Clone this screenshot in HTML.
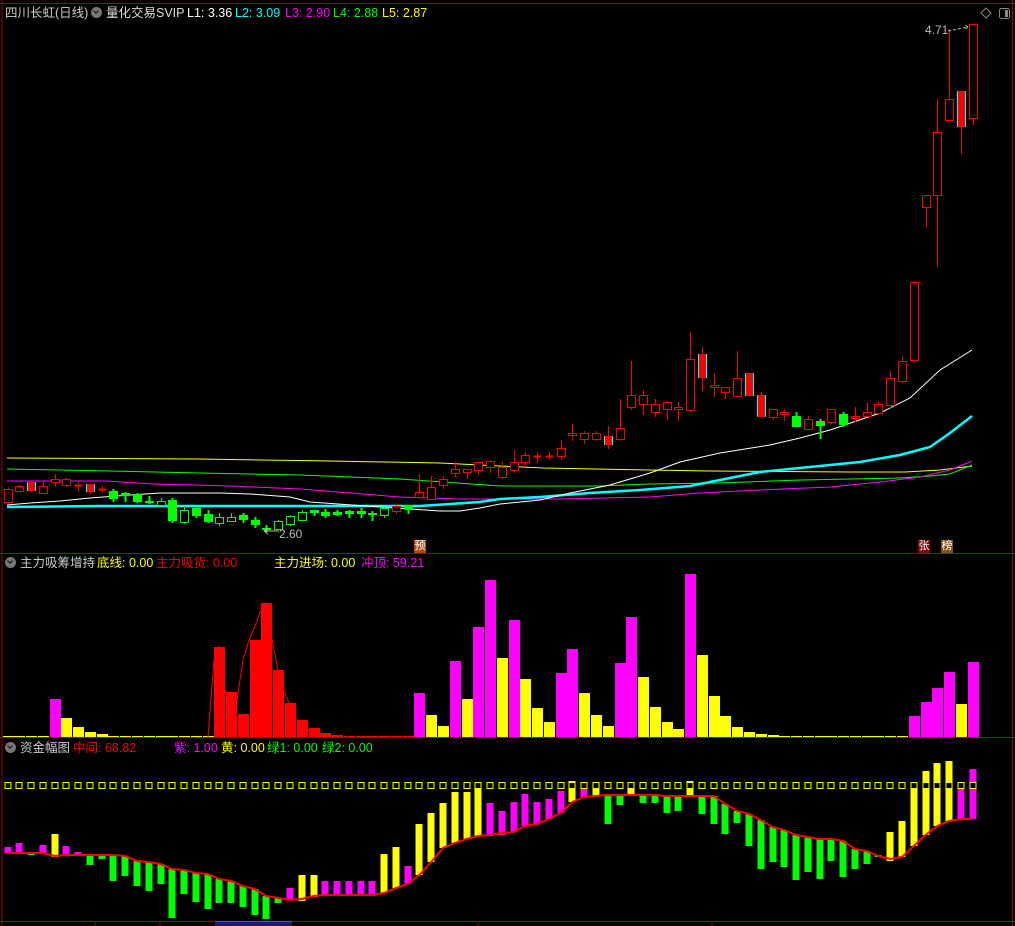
<!DOCTYPE html>
<html><head><meta charset="utf-8"><style>
html,body{margin:0;padding:0;background:#000;overflow:hidden}
body{width:1015px;height:926px;position:relative;font-family:"Liberation Sans","Noto Sans CJK SC",sans-serif}
svg{position:absolute;left:0;top:0}
.t{position:absolute;font-size:12.5px;white-space:nowrap;line-height:14px}
.ic{position:absolute;width:11px;height:11px;border-radius:50%;background:#777}
.ic:after{content:"";position:absolute;left:3px;top:2px;width:3px;height:3px;border-right:1.5px solid #111;border-bottom:1.5px solid #111;transform:rotate(45deg)}
.mk{position:absolute;font-size:11px;color:#fff;width:12px;height:13px;line-height:13px;text-align:center}
</style></head><body>
<svg id="s" width="1015" height="926" xmlns="http://www.w3.org/2000/svg"></svg>
<div class="t" style="left:5px;top:6px;color:#ccc">四川长虹(日线)</div>
<div class="ic" style="left:91px;top:7px"></div>
<div class="t" style="left:106px;top:6px;color:#ddd">量化交易SVIP</div>
<div class="t" style="left:187px;top:6px;color:#fff">L1: 3.36</div>
<div class="t" style="left:235px;top:6px;color:#0ff">L2: 3.09</div>
<div class="t" style="left:285px;top:6px;color:#f0f">L3: 2.90</div>
<div class="t" style="left:333px;top:6px;color:#0f0">L4: 2.88</div>
<div class="t" style="left:382px;top:6px;color:#ff0">L5: 2.87</div>

<div class="ic" style="left:5px;top:557px"></div>
<div class="t" style="left:20px;top:556px;color:#ccc">主力吸筹增持</div>
<div class="t" style="left:97px;top:556px;color:#ff0">底线: 0.00</div>
<div class="t" style="left:156px;top:556px;color:#f00">主力吸货: 0.00</div>
<div class="t" style="left:274px;top:556px;color:#ff0">主力进场: 0.00</div>
<div class="t" style="left:361px;top:556px;color:#f0f">冲顶: 59.21</div>

<div class="ic" style="left:5px;top:742px"></div>
<div class="t" style="left:20px;top:741px;color:#ccc">资金幅图</div>
<div class="t" style="left:73px;top:741px;color:#f00">中间: 68.82</div>
<div class="t" style="left:174px;top:741px;color:#f0f">紫: 1.00</div>
<div class="t" style="left:221px;top:741px;color:#ff0">黄: 0.00</div>
<div class="t" style="left:267px;top:741px;color:#0f0">绿1: 0.00</div>
<div class="t" style="left:322px;top:741px;color:#0f0">绿2: 0.00</div>

<div class="mk" style="left:414px;top:540px;background:#b04a10">预</div>
<div class="mk" style="left:918px;top:540px;background:#7a0a0a">张</div>
<div class="mk" style="left:941px;top:540px;background:#8a5010">榜</div>
<div class="t" style="left:279px;top:527px;color:#bbb;font-size:12px">2.60</div>
<div class="t" style="left:925px;top:23px;color:#bbb;font-size:12px">4.71</div>
<div style="position:absolute;left:215px;top:921px;width:77px;height:6px;background:#1a1a70;border-top:1px solid #5050c0"></div>
<script>
var s=document.getElementById('s'),h='';
function X(i){return 7.5+i*11.77}
function L(p,c,w){h+='<polyline points="'+p.map(function(a){return a.join(',')}).join(' ')+'" fill="none" stroke="'+c+'" stroke-width="'+(w||1)+'"/>'}
function R(x,y,w,hh,f,st){h+='<rect shape-rendering="crispEdges" x="'+x+'" y="'+y+'" width="'+w+'" height="'+Math.max(hh,1)+'" fill="'+f+'"'+(st?' stroke="'+st+'" stroke-width="1"':'')+'/>'}
h+='<line x1="2" y1="0" x2="2" y2="926" stroke="#a00000"/>';
h+='<line x1="1012.5" y1="0" x2="1012.5" y2="926" stroke="#a00000"/>';
h+='<line x1="0" y1="3.5" x2="1015" y2="3.5" stroke="#a00000"/>';
[553.5,737.5,921.5].forEach(function(y){h+='<line x1="0" y1="'+y+'" x2="1015" y2="'+y+'" stroke="#a00000"/>'});
L([[7,458],[200,459],[330,461],[440,463],[500,466],[543,468],[650,470],[708,471],[850,472],[905,472],[940,470],[972,466]],'#ff0');
L([[7,469],[110,471],[200,473],[300,475],[400,479],[500,486],[600,486],[650,484],[720,483],[800,480],[900,478],[930,476],[950,474],[972,465]],'#0f0');
L([[7,481],[105,481],[155,484],[230,486],[300,489],[400,497],[460,499],[560,499],[650,497],[700,493],[760,490],[830,487],[880,482],[920,477],[950,470],[972,461]],'#f0f');
L([[7,507],[100,506],[330,506],[420,506],[450,504],[480,502],[500,499],[540,497],[590,493],[640,490],[690,486],[760,472],[810,467],[860,462],[900,455],[930,447],[950,433],[972,416]],'#0ff',2.5);
L([[7,505],[30,503],[60,501],[90,498],[130,495],[160,493],[220,493],[250,494],[290,497],[310,502],[380,507],[440,511],[460,511],[480,508],[500,504],[540,500],[570,493],[610,485],[650,473],[680,462],[720,453],[770,445],[800,438],[830,430],[880,413],[910,398],[940,370],[972,350]],'#fff');
var C=[[487,489,502,504,'r'],[485,486,491,492,'r'],[481,482,491,492,'c'],[481,486,493,494,'r'],[474,479,482,487,'r'],[478,479,485,487,'r'],[481,485,486,492,'r'],[483,484,492,494,'c'],[486,489,490,493,'r'],[489,491,499,502,'g'],[492,493,496,502,'g'],[493,494,502,503,'g'],[496,501,503,504,'g'],[498,501,505,506,'h'],[498,500,521,523,'g'],[506,510,522,524,'h'],[508,508,516,518,'g'],[510,514,522,523,'g'],[513,517,523,526,'h'],[513,517,521,522,'h'],[513,515,520,523,'g'],[517,520,525,528,'g'],[525,528,530,532,'g'],[520,521,529,530,'h'],[515,516,524,526,'h'],[510,512,520,521,'h'],[510,510,513,516,'g'],[509,512,516,518,'g'],[510,512,515,516,'g'],[510,511,514,518,'g'],[508,511,514,518,'g'],[511,513,515,521,'g'],[507,508,515,518,'h'],[503,506,511,514,'r'],[505,505,510,514,'g'],[474,492,497,497,'r'],[476,487,499,499,'r'],[476,479,485,489,'r'],[462,469,473,477,'r'],[469,469,472,479,'r'],[462,462,470,475,'r'],[460,461,467,473,'r'],[462,467,477,479,'r'],[450,462,470,473,'r'],[452,455,462,465,'r'],[452,456,457,463,'r'],[452,456,457,460,'r'],[440,448,456,460,'r'],[424,433,435,441,'r'],[431,433,439,444,'r'],[431,433,439,441,'r'],[426,436,445,449,'c'],[399,428,439,441,'r'],[361,395,407,410,'r'],[390,395,404,415,'r'],[399,404,412,417,'r'],[401,402,409,420,'r'],[402,407,409,421,'r'],[332,359,410,412,'r'],[347,354,378,391,'c'],[373,385,387,397,'r'],[387,387,392,399,'r'],[351,378,396,398,'r'],[373,373,396,397,'c'],[392,395,417,417,'c'],[409,409,417,420,'r'],[409,412,414,421,'r'],[412,416,427,427,'g'],[416,419,429,429,'r'],[419,421,426,439,'g'],[409,409,422,424,'r'],[412,414,425,427,'g'],[407,416,418,422,'r'],[402,412,416,417,'r'],[402,404,413,415,'r'],[371,378,405,408,'r'],[356,361,381,383,'r'],[282,282,360,363,'r'],[195,195,207,227,'r'],[99,132,195,267,'r'],[29,99,120,120,'r'],[91,91,127,154,'c'],[24,24,118,125,'r']];
C.forEach(function(d,i){var c=Math.round(X(i))+0.5,col=(d[4]=='g'||d[4]=='h')?'#0f0':'#f00';
 h+='<line shape-rendering="crispEdges" x1="'+c+'" y1="'+d[0]+'" x2="'+c+'" y2="'+d[3]+'" stroke="'+col+'" stroke-width="'+(d[4]=='g'?2:1)+'"/>';
 var bh=d[2]-d[1];
 if(bh<2){h+='<line shape-rendering="crispEdges" x1="'+(c-4)+'" y1="'+(d[1]+0.5)+'" x2="'+(c+4)+'" y2="'+(d[1]+0.5)+'" stroke="'+col+'" stroke-width="2"/>';return}
 if(d[4]=='r'||d[4]=='h'){R(c-4,d[1]+0.5,8,bh,'#000',col)}
 else if(d[4]=='g')R(c-4.5,d[1],9,bh,'#0f0');
 else{R(c-4.5,d[1],9,bh,'#0ff');R(c-3.5,d[1],7,bh,'#f00')}
});
h+='<path d="M264 531 L279 531 M264 531 L268 528 M264 531 L268 534" stroke="#bbb" fill="none"/>';
h+='<path d="M948 31 L968 27 M968 27 L964 24 M968 27 L964 30" stroke="#bbb" fill="none" stroke-dasharray="3,2"/>';
h+='<path d="M986 8 L991 13 L986 18 L981 13 Z" stroke="#888" fill="none"/>';
h+='<rect x="999.5" y="8.5" width="10" height="10" rx="2" stroke="#888" fill="none"/><rect x="1005" y="10" width="3" height="7" fill="#888"/>';
var H=[[4,38,'m'],[5,19,'y'],[6,10,'y'],[7,5,'y'],[8,3,'y'],[18,90,'r'],[19,45,'r'],[20,23,'r'],[21,97,'r'],[22,134,'r'],[23,67,'r'],[24,34,'r'],[25,17,'r'],[26,9,'r'],[27,4,'r'],[28,2,'r'],[29,1,'r'],[30,1,'r'],[31,1,'r'],[35,44,'m'],[36,22,'y'],[37,11,'y'],[38,76,'m'],[39,38,'y'],[40,110,'m'],[41,157,'m'],[42,79,'y'],[43,117,'m'],[44,58,'y'],[45,29,'y'],[46,15,'y'],[47,64,'m'],[48,88,'m'],[49,44,'y'],[50,22,'y'],[51,11,'y'],[52,74,'m'],[53,120,'m'],[54,60,'y'],[55,30,'y'],[56,15,'y'],[57,8,'y'],[58,163,'m'],[59,82,'y'],[60,41,'y'],[61,21,'y'],[62,10,'y'],[63,5,'y'],[64,3,'y'],[65,2,'y'],[77,21,'m'],[78,35,'m'],[79,49,'m'],[80,65,'m'],[81,33,'y'],[82,75,'m']];
var hc={m:'#f0f',y:'#ff0',r:'#f00'};
for(var i=0;i<83;i++){R(Math.round(X(i))-5,736,11,1,(i>=18&&i<35)?'#f00':'#ff0')}
H.forEach(function(d){R(Math.round(X(d[0]))-5,737-d[1],11,d[1],hc[d[2]])});
L([[208,737],[214,660],[219,647],[225,690],[231,714],[237,700],[243,660],[249,640],[255,626],[261,610],[266,603],[272,640],[278,670],[284,690],[290,706],[296,718],[302,726],[308,730],[320,734],[340,736]],'#f00');
var LN=[853,853,853,853,856,855,855,855,855,855,856,861,862,864,869,870,873,874,879,881,886,889,896,898,900,899,896,895,895,895,895,895,893,888,884,875,862,848,843,839,836,835,833,832,826,824,819,813,802,797,796,795,795,795,795,795,796,796,796,796,796,804,811,814,820,827,830,835,837,839,839,841,849,851,856,859,857,846,835,826,821,819,819];
var B=[[847,853,'m'],[843,853,'m'],[852,855,'g'],[845,853,'m'],[834,857,'y'],[846,856,'m'],[852,856,'m'],[855,865,'g'],[855,859,'g'],[855,881,'g'],[856,876,'g'],[861,886,'g'],[862,891,'g'],[864,884,'g'],[869,918,'g'],[870,894,'g'],[873,902,'g'],[874,909,'g'],[879,903,'g'],[881,903,'g'],[886,907,'g'],[889,915,'g'],[896,919,'g'],[898,903,'g'],[888,900,'m'],[875,901,'y'],[875,897,'y'],[881,896,'m'],[881,896,'m'],[881,896,'m'],[881,896,'m'],[881,896,'m'],[854,893,'y'],[847,888,'y'],[866,884,'m'],[824,875,'y'],[813,862,'y'],[803,848,'y'],[792,843,'y'],[792,839,'y'],[787,836,'y'],[803,836,'m'],[811,835,'m'],[802,832,'m'],[794,826,'m'],[802,824,'m'],[799,819,'m'],[791,813,'m'],[781,802,'y'],[789,797,'m'],[784,796,'y'],[795,824,'g'],[795,805,'g'],[782,796,'y'],[795,803,'g'],[794,803,'g'],[795,813,'g'],[796,811,'g'],[781,797,'y'],[796,814,'g'],[796,824,'g'],[804,834,'g'],[811,823,'g'],[814,846,'g'],[820,869,'g'],[827,862,'g'],[830,867,'g'],[835,880,'g'],[837,872,'g'],[839,879,'g'],[839,861,'g'],[841,877,'g'],[849,869,'g'],[851,864,'g'],[855,857,'g'],[832,861,'y'],[821,857,'y'],[787,846,'y'],[771,835,'y'],[763,826,'y'],[761,821,'y'],[788,819,'m'],[769,819,'m']];
var fc={m:'#f0f',y:'#ff0',g:'#0f0'};
if(B.length>83)B.splice(41,1);
B.forEach(function(d,i){R(Math.round(X(i))-3.5,d[0],7,d[1]-d[0],fc[d[2]])});
L(LN.map(function(y,i){return [X(i),y]}),'#f00',2);
for(var i=0;i<83;i++){h+='<rect shape-rendering="crispEdges" x="'+(Math.round(X(i))-3)+'" y="782.5" width="6" height="6" fill="#000" stroke="#ff0" stroke-width="1"/>'}
[95,160,289,478,712].forEach(function(x){h+='<line x1="'+x+'" y1="922" x2="'+x+'" y2="926" stroke="#a00000"/>'});
s.innerHTML=h;
</script>
</body></html>
